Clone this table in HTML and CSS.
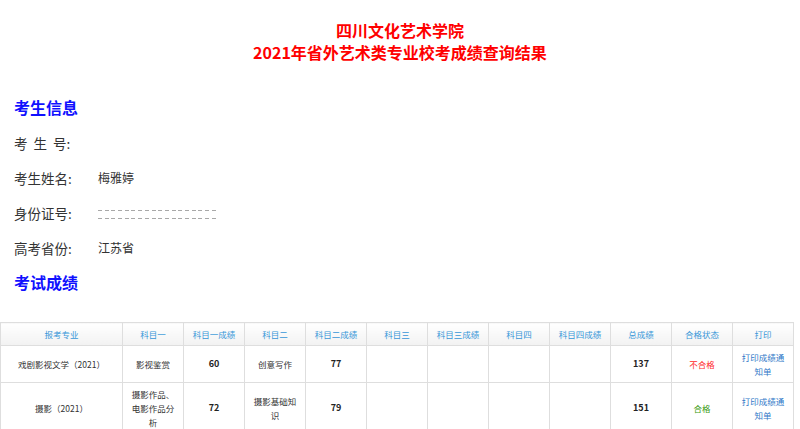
FILE: index.html
```html
<!DOCTYPE html>
<html lang="zh-CN">
<head>
<meta charset="utf-8">
<title>成绩查询结果</title>
<link rel="stylesheet" href="styles.css">
</head>
<body>
<div class="title">
  <div>四川文化艺术学院</div>
  <div>2021年省外艺术类专业校考成绩查询结果</div>
</div>
<div class="info">
  <div class="heading">考生信息</div>
  <div class="row"><span class="label">考&nbsp;&nbsp;生&nbsp;&nbsp;号:</span><span class="value"></span></div>
  <div class="row"><span class="label">考生姓名:</span><span class="value">梅雅婷</span></div>
  <div class="row"><span class="label">身份证号:</span><span class="value"><span class="masked" aria-label="身份证号已隐藏"></span></span></div>
  <div class="row"><span class="label">高考省份:</span><span class="value">江苏省</span></div>
  <div class="heading">考试成绩</div>
</div>
<table class="scores">
  <colgroup>
    <col class="c-major"><col><col><col><col><col><col><col><col><col><col><col>
  </colgroup>
  <thead>
    <tr>
      <th>报考专业</th><th>科目一</th><th>科目一成绩</th><th>科目二</th><th>科目二成绩</th><th>科目三</th><th>科目三成绩</th><th>科目四</th><th>科目四成绩</th><th>总成绩</th><th>合格状态</th><th>打印</th>
    </tr>
  </thead>
  <tbody>
    <tr>
      <td>戏剧影视文学（2021）</td><td>影视鉴赏</td><td class="num">60</td><td>创意写作</td><td class="num">77</td><td></td><td></td><td></td><td></td><td class="num">137</td><td class="fail">不合格</td><td><a class="link" href="#">打印成绩通知单</a></td>
    </tr>
    <tr>
      <td>摄影（2021）</td><td>摄影作品、电影作品分析</td><td class="num">72</td><td>摄影基础知识</td><td class="num">79</td><td></td><td></td><td></td><td></td><td class="num">151</td><td class="pass">合格</td><td><a class="link" href="#">打印成绩通知单</a></td>
    </tr>
  </tbody>
</table>
</body>
</html>
```

FILE: styles.css
```css
body {
  margin: 0;
  font-family: "Noto Sans CJK SC", "Liberation Sans", sans-serif;
  color: #333;
  background: #fff;
}
.title {
  padding-top: 19px;
  text-align: center;
  color: #ff0000;
  font-size: 16px;
  font-weight: bold;
  line-height: 22px;
}
.info {
  padding-left: 14px;
  margin-top: 27px;
}
.heading {
  height: 35px;
  line-height: 35px;
  color: #1010ff;
  font-size: 16px;
  font-weight: bold;
}
.row {
  display: flex;
  align-items: center;
  height: 35px;
}
.label {
  width: 84px;
  font-size: 13.5px;
  color: #333;
}
.value {
  font-size: 12px;
  color: #333;
}
.masked {
  display: inline-block;
  width: 120px;
  height: 9px;
  vertical-align: middle;
  background:
    repeating-linear-gradient(90deg, #a8a8a8 0 4px, transparent 4px 6.7px) top / 100% 1px no-repeat,
    repeating-linear-gradient(90deg, #a8a8a8 0 4px, transparent 4px 6.7px) bottom / 100% 1px no-repeat;
}
.scores {
  margin-top: 22px;
  width: 794px;
  table-layout: fixed;
  border-collapse: collapse;
  font-size: 8.5px;
  line-height: 14px;
}
.scores col { width: 61px; }
.scores col.c-major { width: 122px; }
.scores th, .scores td {
  border: 1px solid #dedede;
  text-align: center;
  vertical-align: middle;
}
.scores th {
  padding: 4px 5px;
  font-weight: normal;
  color: #3797d8;
  background: linear-gradient(#ffffff, #f2f2f2);
}
.scores td {
  padding: 4px 6px;
  color: #333;
}
.scores td.num { font-weight: bold; color: #222; font-size: 9px; }
.scores td.fail { color: #ff2a2a; }
.scores td.pass { color: #3a9a10; }
.link { color: #2f78c8; text-decoration: none; }
```
